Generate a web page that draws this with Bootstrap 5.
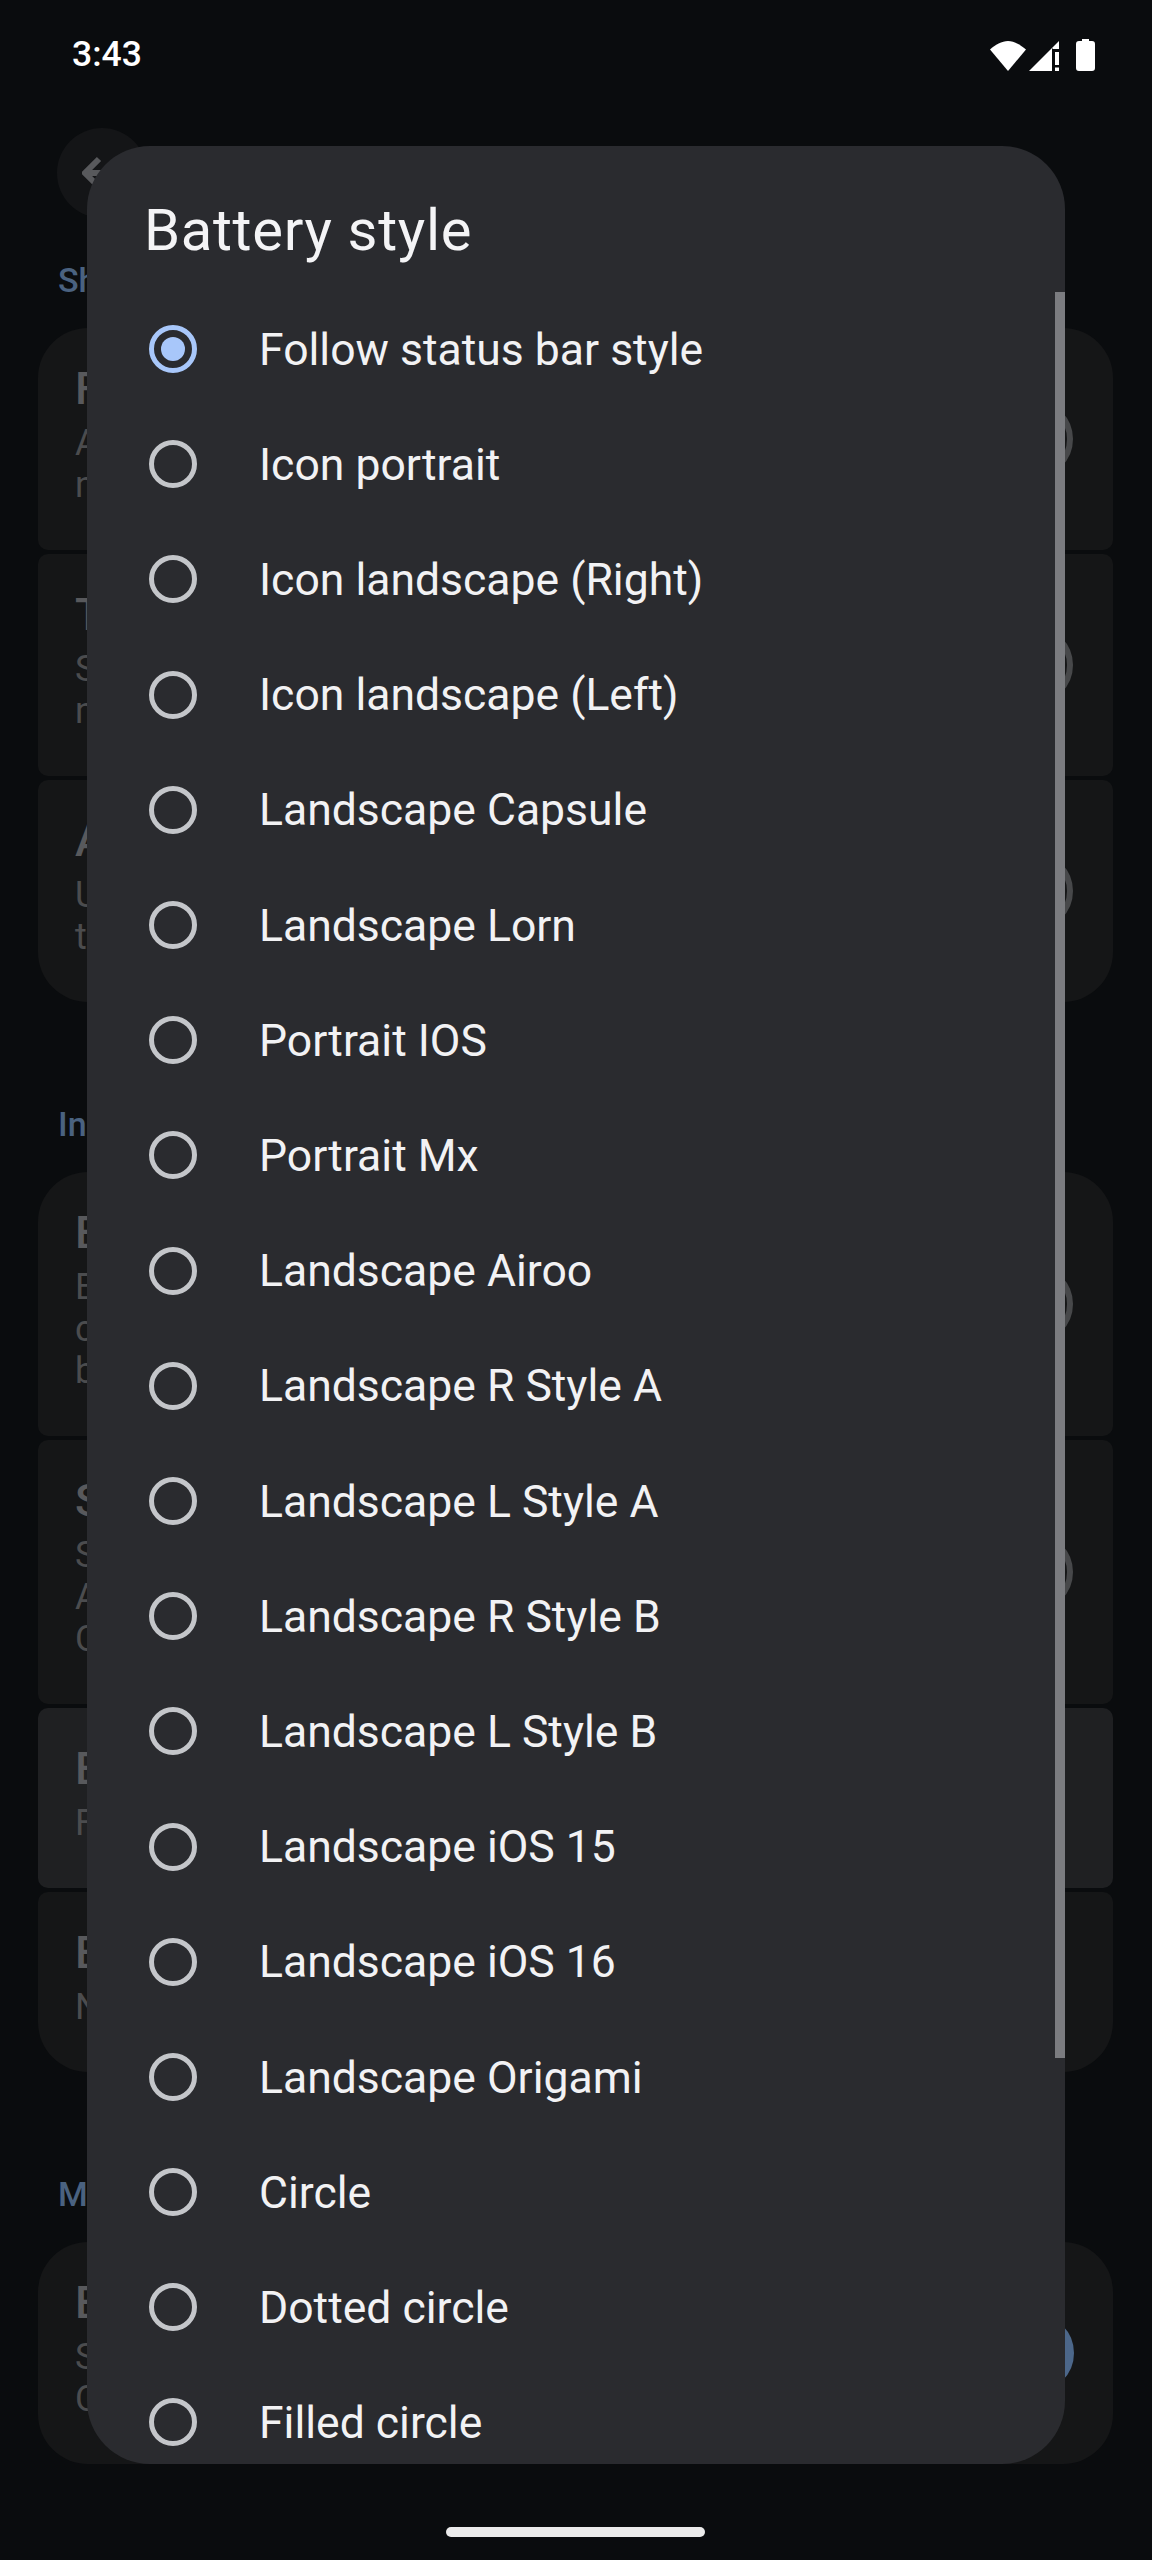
<!DOCTYPE html>
<html lang="en">
<head>
<meta charset="utf-8">
<title>Battery style</title>
<link href="https://cdn.jsdelivr.net/npm/bootstrap@5.3.0/dist/css/bootstrap.min.css" rel="stylesheet">
<style>
html,body{margin:0;background:#0a0b0d;}
.screen{width:1152px;height:2560px;background:#0a0c0e;overflow:hidden;position:relative;font-family:Roboto,"Liberation Sans",sans-serif;}
.statusbar{height:128px;padding:32px 56px 0 72px;color:#fff;}
.clock{font-size:35.5px;line-height:44px;font-weight:500;}
.status-icons{width:auto;height:60px;}
.backbtn{width:90px;height:90px;border-radius:50%;background:#141517;margin-left:57px;}
.sect-label{font-size:34px;line-height:40px;font-weight:500;color:#4a6280;margin:42px 0 28px 58px;}
.sect-label.later{margin-top:102px;}
.grp{margin:0 39px 0 38px;gap:4px;}
.pref{background:#151617;border-radius:10px;padding-right:40px;}
.pref.hi{background:#1f2022;}
.pref.first{border-top-left-radius:50px;border-top-right-radius:50px;}
.pref.last{border-bottom-left-radius:50px;border-bottom-right-radius:50px;}
.pref-text{padding:34px 0 44px 37px;}
.pref-title{font-size:45px;line-height:54px;font-weight:500;color:#58595c;margin-bottom:6px;}
.pref-desc{font-size:36px;line-height:42px;color:#4b4c4e;}
.ghost-switch{width:128px;height:78px;border-radius:39px;border:6px solid #47484a;}
.ghost-switch.lit{background:#4c678a;border-color:#4c678a;margin-right:-1px;}
.dialog-box{position:absolute;left:87px;top:146px;width:978px;height:2318px;background:#2a2b2f;border-radius:63px;overflow:hidden;color:#fff;}
.dialog-title{font-size:58px;line-height:64px;letter-spacing:.65px;padding:52px 0 0 57px;height:145.5px;margin:0;font-weight:400;color:#f4f4f6;}
.opt-list{list-style:none;margin:0;padding:0;}
.opt{height:115.2px;padding-left:62px;gap:62px;font-size:44.5px;color:#f2f2f4;}
.opt-name{margin-top:2px;}
.rad{width:48px;height:48px;border-radius:50%;border:5.5px solid #c4c6ca;flex:none;}
.rad.on{border-color:#a8c7fa;}
.rad.on::after{content:"";width:24px;height:24px;border-radius:50%;background:#a8c7fa;}
.scroll-thumb{position:absolute;right:0;top:146px;width:10px;height:1766px;background:#7b7c80;}
.home-pill{position:absolute;left:446px;bottom:23px;width:259px;height:10px;border-radius:5px;background:#ebebeb;}
</style>
</head>
<body>
<div class="screen">
  <div class="statusbar d-flex justify-content-between align-items-start">
    <span class="clock">3:43</span>
    <svg class="status-icons" viewBox="0 0 108 60" width="108" height="60" aria-hidden="true">
      <path fill="#fff" d="M2 17.500C7 13 14 9 20 9s13 4 18 8.500L20 39z"/>
      <path fill="#fff" d="M41 39 64 16v23z"/>
      <path fill="#fff" d="M64.500 15.500 71 9v8h-6.500z"/>
      <rect x="67" y="20" width="4" height="13" fill="#fff"/>
      <rect x="67" y="35.500" width="4" height="3.500" fill="#fff"/>
      <path fill="#fff" d="M94 7h7v2h3a3 3 0 0 1 3 3v24a3 3 0 0 1-3 3H91a3 3 0 0 1-3-3V12a3 3 0 0 1 3-3h3z"/>
    </svg>
  </div>
  <div class="backbtn d-flex align-items-center justify-content-center">
    <svg width="40" height="40" viewBox="0 0 40 40" aria-hidden="true"><path d="M36 20H4M17 6 3 20l14 14" fill="none" stroke="#58595c" stroke-width="6"/></svg>
  </div>
  <div class="sect-label">Sh</div>
  <div class="grp d-flex flex-column">
    <div class="pref first d-flex justify-content-between align-items-center"><div class="pref-text"><div class="pref-title">F</div><div class="pref-desc">A<br>n</div></div><span class="ghost-switch"></span></div>
    <div class="pref d-flex justify-content-between align-items-center"><div class="pref-text"><div class="pref-title">T</div><div class="pref-desc">S<br>n</div></div><span class="ghost-switch"></span></div>
    <div class="pref last d-flex justify-content-between align-items-center"><div class="pref-text"><div class="pref-title">A</div><div class="pref-desc">U<br>t</div></div><span class="ghost-switch"></span></div>
  </div>
  <div class="sect-label later">In</div>
  <div class="grp d-flex flex-column">
    <div class="pref first d-flex justify-content-between align-items-center"><div class="pref-text"><div class="pref-title">E</div><div class="pref-desc">E<br>c<br>b</div></div><span class="ghost-switch"></span></div>
    <div class="pref d-flex justify-content-between align-items-center"><div class="pref-text"><div class="pref-title">S</div><div class="pref-desc">S<br>A<br>C</div></div><span class="ghost-switch"></span></div>
    <div class="pref hi d-flex justify-content-between align-items-center"><div class="pref-text"><div class="pref-title">E</div><div class="pref-desc">F</div></div></div>
    <div class="pref last d-flex justify-content-between align-items-center"><div class="pref-text"><div class="pref-title">E</div><div class="pref-desc">N</div></div></div>
  </div>
  <div class="sect-label later">M</div>
  <div class="grp d-flex flex-column">
    <div class="pref first last d-flex justify-content-between align-items-center"><div class="pref-text"><div class="pref-title">E</div><div class="pref-desc">S<br>C</div></div><span class="ghost-switch lit"></span></div>
  </div>

  <div class="dialog-box">
    <h1 class="dialog-title">Battery style</h1>
    <ul class="opt-list">
      <li class="opt d-flex align-items-center"><span class="rad on d-flex align-items-center justify-content-center"></span><span class="opt-name">Follow status bar style</span></li>
      <li class="opt d-flex align-items-center"><span class="rad"></span><span class="opt-name">Icon portrait</span></li>
      <li class="opt d-flex align-items-center"><span class="rad"></span><span class="opt-name">Icon landscape (Right)</span></li>
      <li class="opt d-flex align-items-center"><span class="rad"></span><span class="opt-name">Icon landscape (Left)</span></li>
      <li class="opt d-flex align-items-center"><span class="rad"></span><span class="opt-name">Landscape Capsule</span></li>
      <li class="opt d-flex align-items-center"><span class="rad"></span><span class="opt-name">Landscape Lorn</span></li>
      <li class="opt d-flex align-items-center"><span class="rad"></span><span class="opt-name">Portrait IOS</span></li>
      <li class="opt d-flex align-items-center"><span class="rad"></span><span class="opt-name">Portrait Mx</span></li>
      <li class="opt d-flex align-items-center"><span class="rad"></span><span class="opt-name">Landscape Airoo</span></li>
      <li class="opt d-flex align-items-center"><span class="rad"></span><span class="opt-name">Landscape R Style A</span></li>
      <li class="opt d-flex align-items-center"><span class="rad"></span><span class="opt-name">Landscape L Style A</span></li>
      <li class="opt d-flex align-items-center"><span class="rad"></span><span class="opt-name">Landscape R Style B</span></li>
      <li class="opt d-flex align-items-center"><span class="rad"></span><span class="opt-name">Landscape L Style B</span></li>
      <li class="opt d-flex align-items-center"><span class="rad"></span><span class="opt-name">Landscape iOS 15</span></li>
      <li class="opt d-flex align-items-center"><span class="rad"></span><span class="opt-name">Landscape iOS 16</span></li>
      <li class="opt d-flex align-items-center"><span class="rad"></span><span class="opt-name">Landscape Origami</span></li>
      <li class="opt d-flex align-items-center"><span class="rad"></span><span class="opt-name">Circle</span></li>
      <li class="opt d-flex align-items-center"><span class="rad"></span><span class="opt-name">Dotted circle</span></li>
      <li class="opt d-flex align-items-center"><span class="rad"></span><span class="opt-name">Filled circle</span></li>
    </ul>
    <div class="scroll-thumb"></div>
  </div>
  <div class="home-pill"></div>
</div>
<script src="https://cdn.jsdelivr.net/npm/bootstrap@5.3.0/dist/js/bootstrap.bundle.min.js"></script>
</body>
</html>
